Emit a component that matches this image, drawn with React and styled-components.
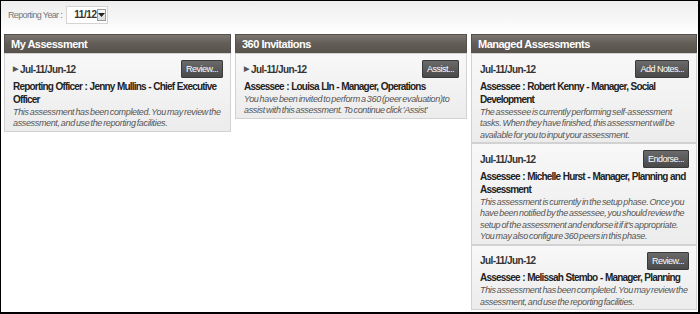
import React from 'react';
import styled, { createGlobalStyle } from 'styled-components';

const GlobalStyle = createGlobalStyle`
    html, body {
        margin: 0;
        padding: 0;
        background: #fff;
    }
    body {
        font-family: "Liberation Sans", Arial, sans-serif;
    }
`

const Frame = styled.div`
    width: 700px;
    height: 314px;
    box-sizing: border-box;
    border-left: 1px solid #000;
    border-top: 1px solid #000;
    border-right: 2px solid #000;
    border-bottom: 2px solid #000;
    background: linear-gradient(to bottom, #ededed 0px, #f7f7f7 18px, #ffffff 32px);
    overflow: hidden;
`

const YearBar = styled.div`
    display: flex;
    align-items: center;
    gap: 4px;
    padding: 4px 0 0 7px;
    height: 19px;
`

const YearLabel = styled.span`
    font-size: 9px;
    letter-spacing: -0.65px;
    color: #777;
`

const Select = styled.div`
    display: flex;
    align-items: center;
    justify-content: space-between;
    width: 42px;
    height: 18px;
    box-sizing: border-box;
    background: #fff;
    border: 1px solid #d4d4d4;
    padding: 0 2px 0 7px;
    font-size: 10px;
    font-weight: bold;
    letter-spacing: -0.4px;
    color: #333;
`

const Arrow = styled.span`
    width: 12px;
    height: 12px;
    box-sizing: border-box;
    border: 1px solid #9a9a9a;
    background: linear-gradient(#fafafa, #dcdcdc);
    display: flex;
    align-items: center;
    justify-content: center;
`

const Columns = styled.div`
    display: grid;
    grid-template-columns: 227px 232px 226px;
    column-gap: 4px;
    align-items: start;
    padding: 10px 0 0 3px;
`

const Column = styled.section`
    display: flex;
    flex-direction: column;
`

const Header = styled.h2`
    margin: 0;
    height: 18px;
    line-height: 18px;
    padding: 0 6px;
    font-size: 11px;
    font-weight: bold;
    letter-spacing: -0.5px;
    color: #fff;
    background: linear-gradient(to bottom, #7d7772 0%, #645e58 45%, #58524d 100%);
    border: 1px solid #55504b;
    border-bottom: none;
`

const Card = styled.div`
    border: 1px solid #d2d2d2;
    background: linear-gradient(to bottom, #f8f8f8, #ececec);
    padding: 6px 3px 1px 8px;
`

const CardTop = styled.div`
    display: flex;
    align-items: center;
    justify-content: space-between;
    height: 18px;
    padding-right: 4px;
`

const Period = styled.span`
    font-size: 10px;
    font-weight: bold;
    letter-spacing: -0.6px;
    color: #333;
    display: flex;
    align-items: center;
    gap: 2px;
`

const Tri = styled.span`
    font-size: 7px;
    letter-spacing: 0;
    color: #555;
`

const Button = styled.button`
    height: 18px;
    padding: 0 4px;
    font-family: inherit;
    font-size: 9px;
    letter-spacing: -0.5px;
    color: #fff;
    background: linear-gradient(to bottom, #6a6a6a, #4a4a4a);
    border: 1px solid #3a3a3a;
    border-radius: 1px;
`

const Title = styled.div`
    margin-top: 1.5px;
    padding-right: 4px;
    font-size: 10px;
    font-weight: bold;
    letter-spacing: -0.8px;
    word-spacing: 0.5px;
    line-height: 13px;
    color: #222;
`

const Note = styled.p`
    margin: 1px 0 0;
    font-size: 9px;
    font-style: italic;
    letter-spacing: -0.35px;
    word-spacing: -1px;
    line-height: 11.5px;
    color: #555;
`

const columns = [
    {
        title: 'My Assessment',
        items: [
            {
                arrow: true,
                action: 'Review...',
                who: 'Reporting Officer : Jenny Mullins - Chief Executive Officer',
                note: 'This assessment has been completed. You may review the assessment, and use the reporting facilities.',
            },
        ],
    },
    {
        title: '360 Invitations',
        items: [
            {
                arrow: true,
                action: 'Assist...',
                who: 'Assessee : Louisa LIn - Manager, Operations',
                note: "You have been invited to perform a 360 (peer evaluation)to assist with this assessment. To continue click 'Assist'",
            },
        ],
    },
    {
        title: 'Managed Assessments',
        items: [
            {
                action: 'Add Notes...',
                who: 'Assessee : Robert Kenny - Manager, Social Development',
                note: 'The assessee is currently performing self-assessment tasks. When they have finished, this assessment will be available for you to input your assessment.',
            },
            {
                action: 'Endorse...',
                who: 'Assessee : Michelle Hurst - Manager, Planning and Assessment',
                note: "This assessment is currently in the setup phase. Once you have been notified by the assessee, you should review the setup of the assessment and endorse it if it's appropriate. You may also configure 360 peers in this phase.",
            },
            {
                action: 'Review...',
                who: 'Assessee : Melissah Stembo - Manager, Planning',
                note: 'This assessment has been completed. You may review the assessment, and use the reporting facilities.',
            },
        ],
    },
]

const App = () => (
    <Frame>
        <GlobalStyle />
        <YearBar>
            <YearLabel>Reporting Year :</YearLabel>
            <Select>
                11/12
                <Arrow>
                    <svg width="7" height="4" viewBox="0 0 7 4"><path d="M0 0h7L3.5 4z" fill="#222" /></svg>
                </Arrow>
            </Select>
        </YearBar>
        <Columns>
            {columns.map(col => (
                <Column key={col.title}>
                    <Header>{col.title}</Header>
                    {col.items.map((item, i) => (
                        <Card key={i}>
                            <CardTop>
                                <Period>
                                    {item.arrow && <Tri>▶</Tri>}
                                    Jul-11/Jun-12
                                </Period>
                                <Button>{item.action}</Button>
                            </CardTop>
                            <Title>{item.who}</Title>
                            <Note>{item.note}</Note>
                        </Card>
                    ))}
                </Column>
            ))}
        </Columns>
    </Frame>
)

export default App;
